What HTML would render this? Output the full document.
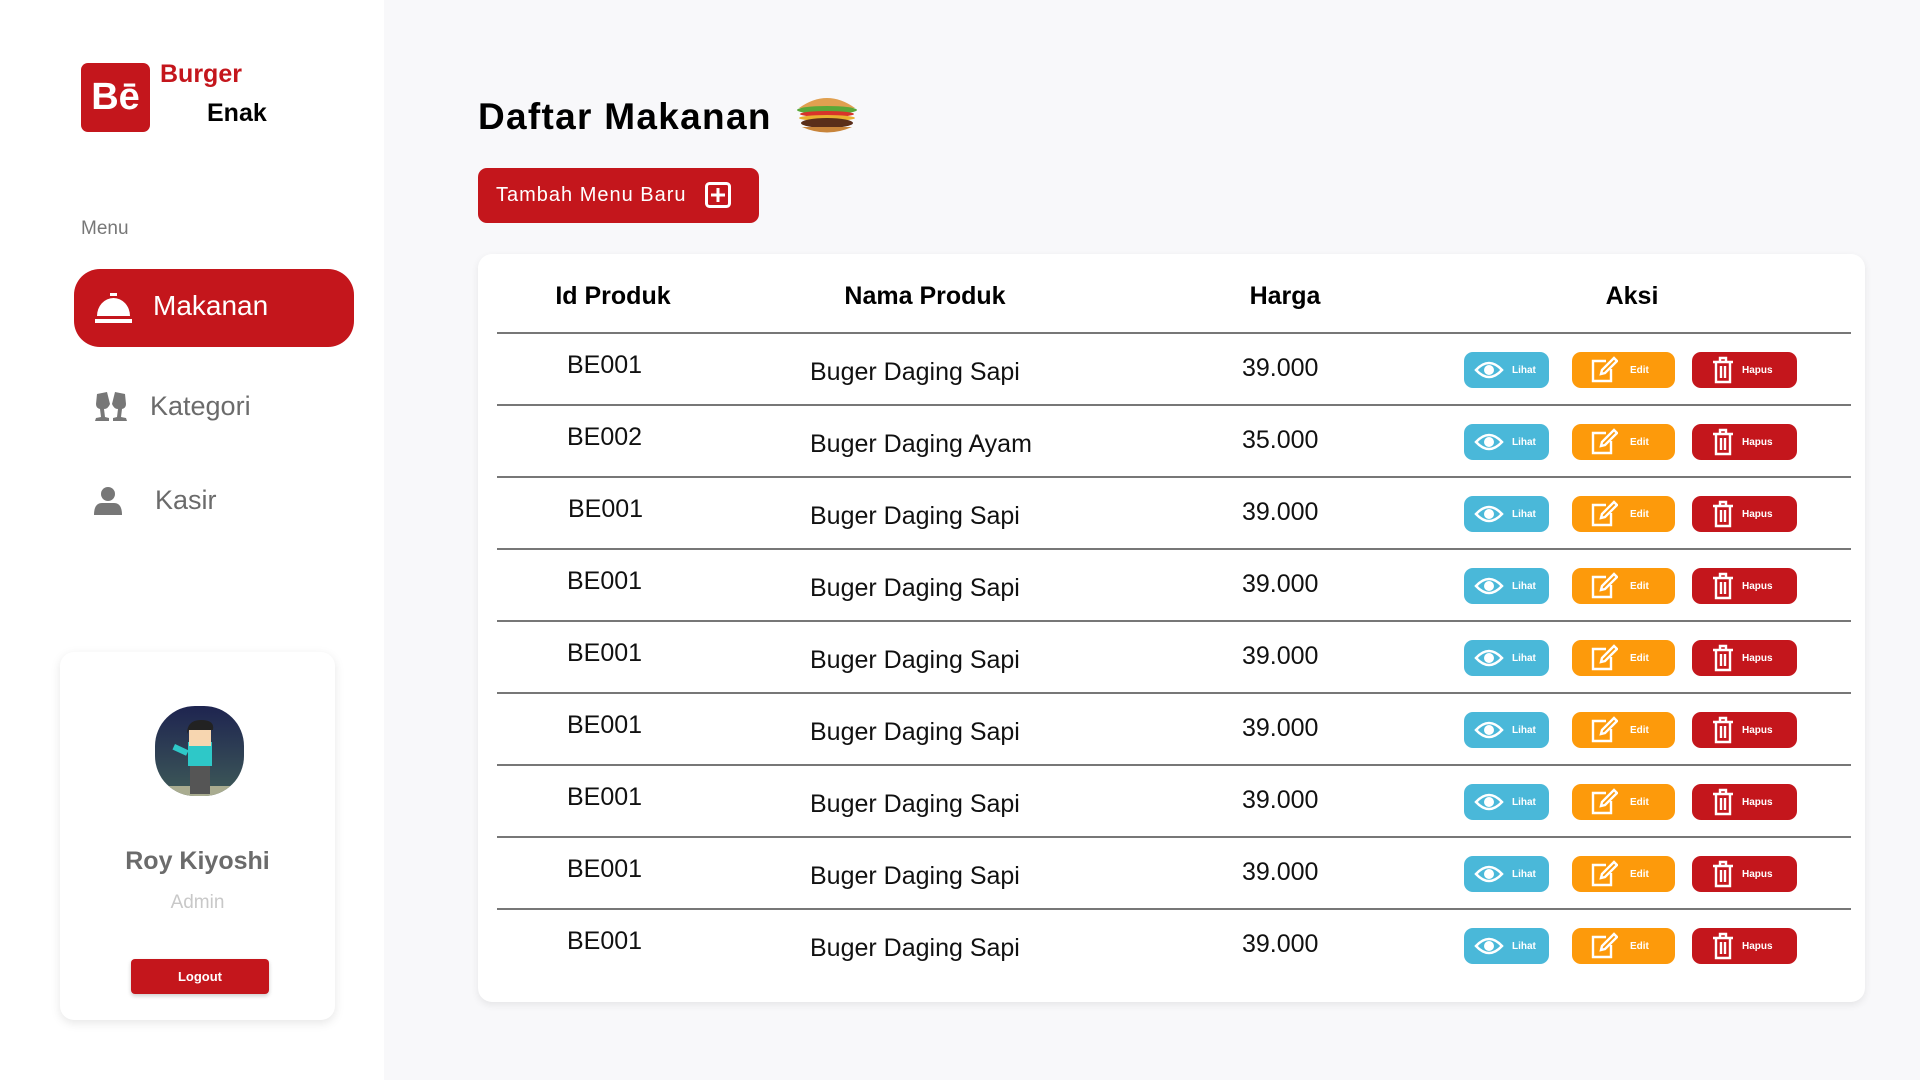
<!DOCTYPE html>
<html><head><meta charset="utf-8"><style>
*{margin:0;padding:0;box-sizing:border-box}
body{width:1920px;height:1080px;background:#f8f8fa;font-family:"Liberation Sans",sans-serif;position:relative;overflow:hidden}
.a{position:absolute}
.side{left:0;top:0;width:384px;height:1080px;background:#fff}
.nav{font-size:27px;color:#6b6b6b}
.card{left:478px;top:254px;width:1387px;height:748px;background:#fff;border-radius:14px;box-shadow:0 3px 8px rgba(0,0,0,.08)}
.th{top:282px;font-weight:bold;font-size:25px;color:#000;text-align:center}
.row{left:497px;width:1354px;height:72px;border-top:2px solid #777}
.row span{position:absolute;font-size:25px;color:#111}
.b{position:absolute;top:18px;height:36px;border-radius:9px;color:#fff;font-size:10px;font-weight:bold;display:flex;align-items:center}
.b svg{margin-right:8px}
</style></head><body>
<div class="a side"></div>
<div class="a" style="left:81px;top:63px;width:69px;height:69px;background:#c4161c;border-radius:7px;color:#fff;font-weight:bold;font-size:38px;line-height:69px;text-align:center">Bē</div>
<div class="a" style="left:160px;top:60px;color:#c4161c;font-weight:bold;font-size:25px">Burger</div>
<div class="a" style="left:207px;top:99px;color:#000;font-weight:bold;font-size:25px">Enak</div>
<div class="a" style="left:81px;top:218px;color:#777;font-size:19px">Menu</div>
<div class="a" style="left:74px;top:269px;width:280px;height:78px;background:#c4161c;border-radius:26px"></div>
<svg class="a" style="left:95px;top:293px" width="37" height="30" viewBox="0 0 37 30"><rect x="15" y="0" width="7" height="3" fill="#fff"/><path d="M2 23 A16.5 18 0 0 1 35 23 Z" fill="#fff"/><rect x="0" y="26" width="37" height="4" fill="#fff"/></svg>
<div class="a" style="left:153px;top:290px;color:#fff;font-size:28px">Makanan</div>
<svg class="a" style="left:93px;top:392px" width="36" height="30" viewBox="0 0 36 30" fill="#777"><path d="M4 2 L14 0 L17 12 Q15 17 11 17 L12 25 L16 26 L16 29 L2 29 L3 26 L8 25 L7 17 Q3 16 3 12 Z"/><path d="M32 2 L22 0 L19 12 Q21 17 25 17 L24 25 L20 26 L20 29 L34 29 L33 26 L28 25 L29 17 Q33 16 33 12 Z"/></svg>
<div class="a nav" style="left:150px;top:391px">Kategori</div>
<svg class="a" style="left:94px;top:487px" width="28" height="28" viewBox="0 0 28 28" fill="#777"><circle cx="14" cy="7" r="7"/><path d="M0 28 Q0 16 8 16 L20 16 Q28 16 28 28 Z"/></svg>
<div class="a nav" style="left:155px;top:485px">Kasir</div>
<div class="a" style="left:60px;top:652px;width:275px;height:368px;background:#fff;border-radius:14px;box-shadow:0 3px 10px rgba(0,0,0,.1)"></div>
<svg class="a" style="left:155px;top:706px" width="89" height="90" viewBox="0 0 89 90"><defs><linearGradient id="g" x1="0" y1="0" x2="0" y2="1"><stop offset="0" stop-color="#1e2450"/><stop offset="1" stop-color="#3e5a58"/></linearGradient><clipPath id="c"><rect width="89" height="90" rx="40"/></clipPath></defs><g clip-path="url(#c)"><rect width="89" height="90" fill="url(#g)"/><rect y="80" width="89" height="10" fill="#a9ac90"/><rect x="35" y="54" width="20" height="34" fill="#555"/><rect x="33" y="36" width="24" height="24" fill="#2ec8c8"/><rect x="20" y="38" width="15" height="6" fill="#2ec8c8" transform="rotate(25 20 38)"/><rect x="34" y="22" width="22" height="18" fill="#f7d6b0"/><path d="M32 28 Q32 14 46 14 Q60 14 58 24 L34 24 Z" fill="#222"/></g></svg>
<div class="a" style="left:60px;top:847px;width:275px;text-align:center;color:#6b6b6b;font-weight:bold;font-size:25px">Roy Kiyoshi</div>
<div class="a" style="left:60px;top:892px;width:275px;text-align:center;color:#c8c8c8;font-size:19px">Admin</div>
<div class="a" style="left:131px;top:959px;width:138px;height:35px;background:#c4161c;border-radius:4px;color:#fff;font-weight:bold;font-size:13px;line-height:35px;text-align:center;box-shadow:0 2px 4px rgba(0,0,0,.2)">Logout</div>

<div class="a" style="left:478px;top:96px;font-weight:bold;font-size:37px;letter-spacing:1.3px;color:#000">Daftar Makanan</div>
<svg class="a" style="left:794px;top:92px" width="66" height="44" viewBox="0 0 66 44"><path d="M5 16 Q33 -4 61 16 Z" fill="#e0a050"/><ellipse cx="33" cy="18" rx="30" ry="4" fill="#5aa838"/><ellipse cx="33" cy="22" rx="27" ry="3" fill="#d8342a"/><ellipse cx="33" cy="26" rx="28" ry="3" fill="#e8b030"/><ellipse cx="33" cy="31" rx="26" ry="5" fill="#5a2e1a"/><path d="M8 35 Q33 46 58 35 Z" fill="#c8843a"/></svg>
<div class="a" style="left:478px;top:168px;width:281px;height:55px;background:#c4161c;border-radius:9px"></div>
<div class="a" style="left:496px;top:184px;color:#fff;font-size:20px;letter-spacing:1px">Tambah Menu Baru</div>
<svg class="a" style="left:705px;top:182px" width="26" height="26" viewBox="0 0 26 26"><rect x="1.5" y="1.5" width="23" height="23" rx="3" fill="none" stroke="#fff" stroke-width="3"/><path d="M13 6V20M6 13H20" stroke="#fff" stroke-width="3"/></svg>

<div class="a card"></div>
<div class="a th" style="left:513px;width:200px">Id Produk</div>
<div class="a th" style="left:800px;width:250px">Nama Produk</div>
<div class="a th" style="left:1185px;width:200px">Harga</div>
<div class="a th" style="left:1532px;width:200px">Aksi</div>

<div id="rows"></div>
<div class="a" style="left:497px;top:908px;width:1354px;border-top:2px solid #777"></div>
<script>
var d=[["BE001","Buger Daging Sapi","39.000",567],["BE002","Buger Daging Ayam","35.000",567],["BE001","Buger Daging Sapi","39.000",568],["BE001","Buger Daging Sapi","39.000",567],["BE001","Buger Daging Sapi","39.000",567],["BE001","Buger Daging Sapi","39.000",567],["BE001","Buger Daging Sapi","39.000",567],["BE001","Buger Daging Sapi","39.000",567],["BE001","Buger Daging Sapi","39.000",567]];
var eye='<svg width="30" height="20" viewBox="0 0 30 20"><path d="M2 10 Q15 -4 28 10 Q15 24 2 10 Z" fill="none" stroke="#fff" stroke-width="2.5"/><circle cx="15" cy="10" r="5" fill="#fff"/></svg>';
var ed='<svg width="28" height="28" viewBox="0 0 28 28" fill="none" stroke="#fff" stroke-width="2.4"><path d="M16 5H3V25H21V13"/><path d="M24 2L27 5L15 17L11 18L12 14Z"/></svg>';
var tr='<svg width="22" height="28" viewBox="0 0 22 28" fill="none" stroke="#fff" stroke-width="2.4"><path d="M1 6H21M8 6V2H14V6M4 6V26H18V6M9 10V22M13 10V22"/></svg>';
var h='';
d.forEach(function(r,i){var t=332+i*72;
h+='<div class="a row" style="top:'+t+'px"><span style="left:'+(r[3]-497)+'px;top:17px">'+r[0]+'</span><span style="left:313px;top:24px">'+r[1]+'</span><span style="left:745px;top:20px">'+r[2]+'</span>'+
'<div class="b" style="left:967px;width:85px;background:#4ab8d9;padding-left:10px">'+eye+'Lihat</div>'+
'<div class="b" style="left:1075px;width:103px;background:#fd9a0b;padding-left:18px">'+ed+'<span style="position:static;font-size:10px;color:#fff;margin-left:4px">Edit</span></div>'+
'<div class="b" style="left:1195px;width:105px;background:#c4161c;padding-left:20px">'+tr+'Hapus</div></div>';});
document.getElementById('rows').innerHTML=h;
</script>
</body></html>
